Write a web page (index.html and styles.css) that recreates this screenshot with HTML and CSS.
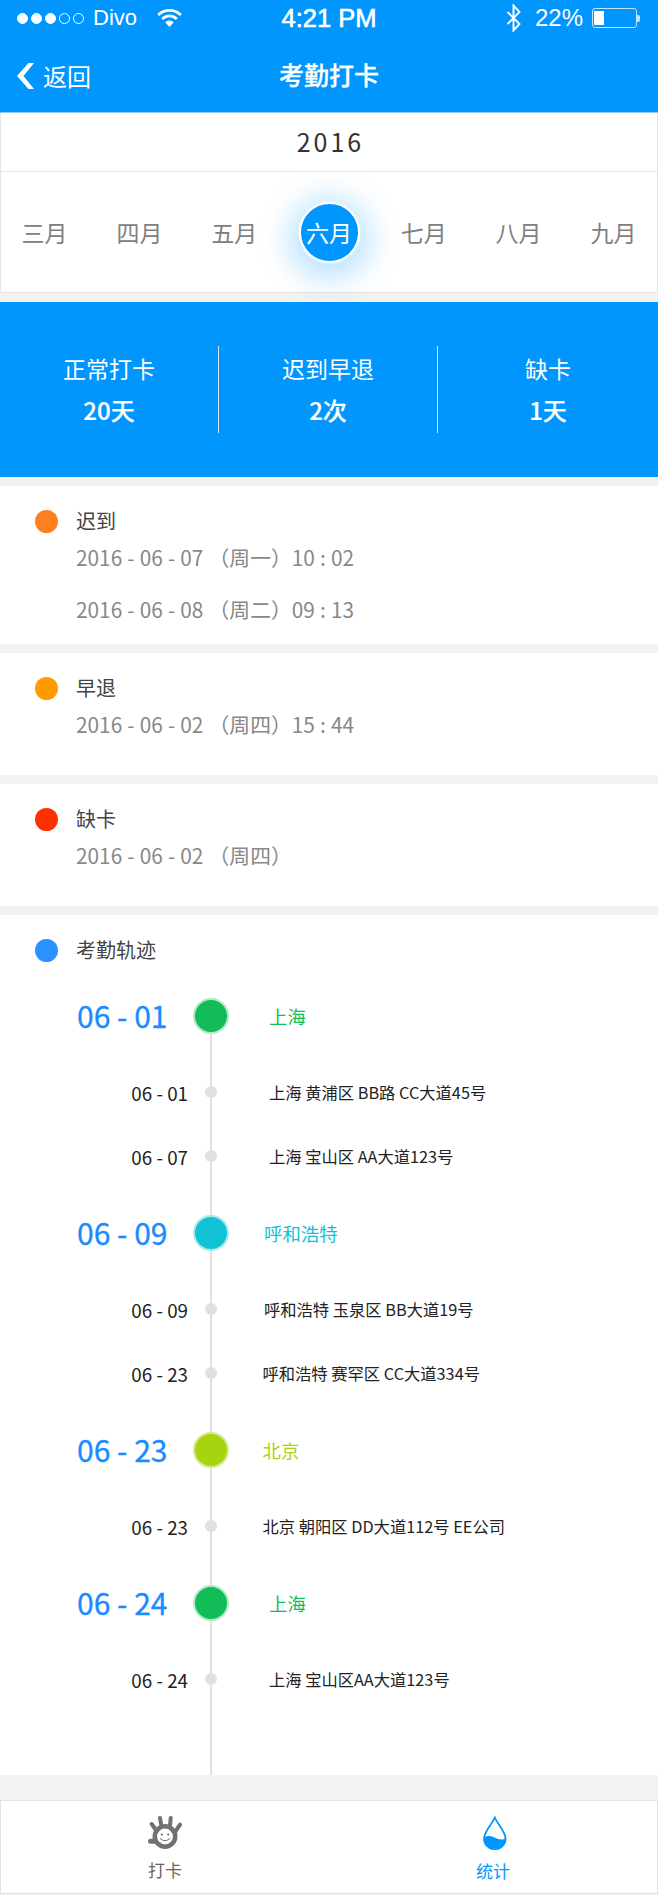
FILE: index.html
```html
<!DOCTYPE html>
<html lang="zh-CN">
<head>
<meta charset="utf-8">
<title>考勤打卡</title>
<link rel="stylesheet" href="styles.css">
</head>
<body>
<div class="page">
  <header class="header">
    <div class="status">
      <div class="status-left">
        <span class="signal"><i class="on"></i><i class="on"></i><i class="on"></i><i></i><i></i></span>
        <span class="carrier">Divo</span>
        <svg class="wifi" width="25" height="20" viewBox="0 0 25 20" fill="none" stroke="#fff" stroke-width="2.6"><path d="M1.2 7A16 16 0 0 1 23.8 7"/><path d="M5.2 11A10 10 0 0 1 19.8 11"/><path d="M8.2 14.2A6 6 0 0 1 16.8 14.2L12.5 19Z" fill="#fff" stroke="none"/></svg>
      </div>
      <div class="clock">4:21 PM</div>
      <div class="status-right">
        <svg class="bt" width="15" height="28" viewBox="0 0 15 28" fill="none" stroke="#fff" stroke-width="1.9"><path d="M1.5 8L13.5 20L7.5 26.5V1.5L13.5 8L1.5 20"/></svg>
        <span class="pct">22%</span>
        <span class="battery"><span class="battery-fill"></span></span>
      </div>
    </div>
    <nav class="nav">
      <a class="back">
        <svg width="17" height="26" viewBox="0 0 17 26" fill="#fff"><path d="M11.5 0H17L6.5 13L17 26H11.5L0 13Z"/></svg>
        <span>返回</span>
      </a>
      <h1 class="nav-title">考勤打卡</h1>
    </nav>
  </header>

  <section class="calendar">
    <div class="year">2016</div>
    <div class="months">
      <span class="month">三月</span>
      <span class="month">四月</span>
      <span class="month">五月</span>
      <span class="month"><b class="month-active">六月</b></span>
      <span class="month">七月</span>
      <span class="month">八月</span>
      <span class="month">九月</span>
    </div>
  </section>

  <section class="stats">
    <div class="stat"><div class="stat-label">正常打卡</div><div class="stat-value">20天</div></div>
    <div class="stat"><div class="stat-label">迟到早退</div><div class="stat-value">2次</div></div>
    <div class="stat"><div class="stat-label">缺卡</div><div class="stat-value">1天</div></div>
  </section>

  <section class="block block-tight">
    <h2 class="block-title"><i class="dot dot-orange"></i>迟到</h2>
    <p class="record">2016 - 06 - 07 （周一）10 : 02</p>
    <p class="record">2016 - 06 - 08 （周二）09 : 13</p>
  </section>

  <section class="block">
    <h2 class="block-title"><i class="dot dot-amber"></i>早退</h2>
    <p class="record">2016 - 06 - 02 （周四）15 : 44</p>
  </section>

  <section class="block">
    <h2 class="block-title"><i class="dot dot-red"></i>缺卡</h2>
    <p class="record">2016 - 06 - 02 （周四）</p>
  </section>

  <section class="block block-track">
    <h2 class="block-title"><i class="dot dot-blue"></i>考勤轨迹</h2>
    <div class="track">
      <div class="row row-main green"><span class="date">06 - 01</span><span class="node"></span><span class="place">上海</span></div>
      <div class="row"><span class="date">06 - 01</span><span class="node"></span><span class="place">上海 黄浦区 BB路 CC大道45号</span></div>
      <div class="row"><span class="date">06 - 07</span><span class="node"></span><span class="place">上海 宝山区 AA大道123号</span></div>
      <div class="row row-main teal"><span class="date">06 - 09</span><span class="node"></span><span class="place shift-s">呼和浩特</span></div>
      <div class="row"><span class="date">06 - 09</span><span class="node"></span><span class="place shift-s">呼和浩特 玉泉区 BB大道19号</span></div>
      <div class="row"><span class="date">06 - 23</span><span class="node"></span><span class="place shift-m">呼和浩特 赛罕区 CC大道334号</span></div>
      <div class="row row-main lime"><span class="date">06 - 23</span><span class="node"></span><span class="place shift-m">北京</span></div>
      <div class="row"><span class="date">06 - 23</span><span class="node"></span><span class="place shift-m">北京 朝阳区 DD大道112号 EE公司</span></div>
      <div class="row row-main green"><span class="date">06 - 24</span><span class="node"></span><span class="place">上海</span></div>
      <div class="row"><span class="date">06 - 24</span><span class="node"></span><span class="place">上海 宝山区AA大道123号</span></div>
    </div>
  </section>

  <footer class="tabbar">
    <a class="tab">
      <svg class="tab-icon" width="34" height="34" viewBox="0 0 34 34" fill="none" stroke="#717171" stroke-linecap="round">
        <path stroke-width="4" d="M12 3L14 14M22.7 3L21.7 14M32 9.7L27 17M3.7 9L9.3 17"/>
        <path stroke-width="5" d="M2.5 26.3H7"/>
        <circle cx="17" cy="21.5" r="10.2" fill="#fff" stroke-width="4.6"/>
        <circle cx="13.8" cy="19.6" r="1.1" fill="#717171" stroke="none"/>
        <circle cx="20.2" cy="19.6" r="1.1" fill="#717171" stroke="none"/>
        <path stroke-width="1" d="M12.2 23.6Q17 28 21.8 23.6"/>
      </svg>
      <span>打卡</span>
    </a>
    <a class="tab tab-active">
      <svg class="tab-icon" width="24" height="34" viewBox="0 0 24 34" fill="none" stroke="#0096fe" stroke-width="1.8">
        <path d="M11.8 1.5C14 7 22.6 16 22.6 22.5A10.8 10.8 0 0 1 1 22.5C1 16 9.6 7 11.8 1.5Z"/>
        <path fill="#0096fe" stroke="none" d="M1 22C3 19.5 7 19.5 10.5 21C14.5 23 19.5 25 22.6 22A10.8 10.8 0 0 1 1 22Z"/>
      </svg>
      <span>统计</span>
    </a>
  </footer>
</div>
</body>
</html>
```
FILE: styles.css
```css
* { box-sizing: border-box; }
html, body { margin: 0; padding: 0; }
body {
  background: #f2f2f2;
  font-family: "Noto Sans CJK SC", "Noto Sans", sans-serif;
}
.page { width: 658px; height: 1895px; overflow: hidden; }

/* header */
.header { background: #0096fe; color: #fff; height: 113px; border-bottom: 1px solid #8ccbf7; }
.status {
  height: 36px;
  display: grid;
  grid-template-columns: 1fr auto 1fr;
  align-items: center;
  font-family: "Liberation Sans", Arial, sans-serif;
}
.status-left { display: flex; align-items: center; padding-left: 17px; }
.signal { display: flex; gap: 3px; margin-right: 9px; }
.signal i { width: 11px; height: 11px; border-radius: 50%; border: 1px solid #fff; }
.signal i.on { background: #fff; }
.carrier { font-size: 22px; margin-right: 20px; }
.clock { font-size: 25.5px; -webkit-text-stroke: 0.6px #fff; }
.status-right { display: flex; align-items: center; justify-content: flex-end; padding-right: 21px; }
.bt { margin-right: 14px; }
.pct { font-size: 24px; margin-right: 9px; }
.battery {
  position: relative;
  width: 45px;
  height: 20px;
  border: 1px solid #bfe3fd;
  border-radius: 3px;
  padding: 2px 1px;
}
.battery::after {
  content: "";
  position: absolute;
  right: -4px;
  top: 6px;
  width: 3px;
  height: 7px;
  background: #bfe3fd;
  border-radius: 0 2px 2px 0;
}
.battery-fill { display: block; width: 10px; height: 100%; background: #fff; }
.nav {
  height: 76px;
  display: grid;
  grid-template-columns: 1fr auto 1fr;
  align-items: center;
}
.back { display: flex; align-items: center; gap: 9px; padding: 4px 0 0 17px; font-size: 24px; }
.back span { line-height: 26px; }
.nav-title { margin: 0; font-size: 25px; font-weight: 500; line-height: 30px; -webkit-text-stroke: 0.3px #fff; }

/* calendar */
.calendar { background: #fff; border: 1px solid #e6e6e6; border-top: 0; height: 180px; }
.year {
  height: 59px;
  border-bottom: 1px solid #e6e6e6;
  padding-left: 3px;
  text-align: center;
  font-size: 25px;
  line-height: 57px;
  letter-spacing: 3px;
  color: #333;
}
.months { height: 120px; display: flex; justify-content: center; align-items: center; overflow: visible; }
.month { flex: 0 0 94.8px; display: flex; justify-content: center; align-items: center; font-size: 23px; color: #808080; }
.month-active {
  flex: none;
  width: 61px;
  height: 61px;
  border-radius: 50%;
  background: #0096fe;
  border: 2px solid #fff;
  color: #fff;
  font-weight: 400;
  display: flex;
  align-items: center;
  justify-content: center;
  box-shadow: 0 0 0 1px #e7f4fe, 0 6px 30px 10px rgba(0, 150, 254, 0.28);
}

/* stats */
.stats {
  margin-top: 9px;
  height: 175px;
  background: #0096fe;
  color: #fff;
  display: grid;
  grid-template-columns: 219px 219px 220px;
  align-items: center;
}
.stat { height: 87px; border-right: 1px solid #cfe9fd; text-align: center; }
.stat:last-child { border-right: 0; }
.stat-label { font-size: 23px; line-height: 30px; margin-top: 7px; }
.stat-value { font-size: 24px; line-height: 30px; font-weight: 500; margin-top: 12px; -webkit-text-stroke: 0.2px #fff; }

/* record blocks */
.block { background: #fff; margin-top: 9px; padding: 22px 0 24px; }
.block-tight { padding-bottom: 8px; }
.block-title {
  margin: 0;
  display: flex;
  align-items: center;
  height: 26px;
  padding-left: 35px;
  font-size: 20px;
  line-height: 24px;
  font-weight: 400;
  color: #444;
}
.dot { width: 23px; height: 23px; border-radius: 50%; margin-right: 18px; }
.dot-orange { background: #ff7f20; }
.dot-amber { background: #ff9a00; }
.dot-red { background: #ff3000; }
.dot-blue { background: #2a92ff; }
.record {
  margin: 0;
  padding-left: 76px;
  font-size: 20.8px;
  line-height: 52px;
  word-spacing: 0.5px;
  color: #888;
}
.record:first-of-type { margin-top: -3px; }
.block-tight .record:last-child { margin-bottom: 1px; }
.block .record:only-of-type { margin-bottom: 1px; }

/* track */
.block-track { height: 860px; padding-bottom: 0; }
.track { position: relative; margin-top: 8px; }
.track::before {
  content: "";
  position: absolute;
  left: 210px;
  top: 44px;
  bottom: -64px;
  width: 2px;
  background: #e0e0e0;
}
.row {
  position: relative;
  height: 64px;
  display: grid;
  grid-template-columns: 191px 40px 1fr;
  align-items: center;
}
.row-main { height: 89px; }
.date { text-align: right; padding-right: 3px; font-size: 18.8px; color: #222; }
.node { justify-self: center; width: 12px; height: 12px; border-radius: 50%; background: #e0e0e0; }
.place { padding-left: 38px; font-size: 16.3px; color: #222; white-space: nowrap; }
.shift-s { padding-left: 33px; }
.shift-m { padding-left: 31.5px; }
.row-main .date {
  padding-right: 23.5px;
  font-size: 30px;
  line-height: 36px;
  padding-bottom: 2px;
  color: #1a8cff;
  -webkit-text-stroke: 0.3px #1a8cff;
}
.row-main .node { width: 36px; height: 36px; border: 2px solid; }
.row-main .place { font-size: 18.4px; }
.green .node { background: #12bc56; border-color: #b4e9c8; }
.green .place { color: #12bc56; }
.teal .node { background: #11c2d6; border-color: #aae8ef; }
.teal .place { color: #11c2d6; }
.lime .node { background: #a8d30f; border-color: #d6eb8f; }
.lime .place { color: #a8d30f; }

/* tabbar */
.tabbar {
  margin-top: 25px;
  height: 94px;
  background: #fff;
  border: 1px solid #e2e2e2;
  display: grid;
  grid-template-columns: 1fr 1fr;
}
.tab {
  display: flex;
  flex-direction: column;
  align-items: center;
  padding-top: 14px;
  font-size: 17px;
  line-height: 24px;
  color: #666;
}
.tab-icon { margin-bottom: 9px; }
.tab-active { color: #0096fe; }
.tab-active .tab-icon { margin: 1px 0 8px 3px; }
.tab-active span { padding-top: 1px; }
```
